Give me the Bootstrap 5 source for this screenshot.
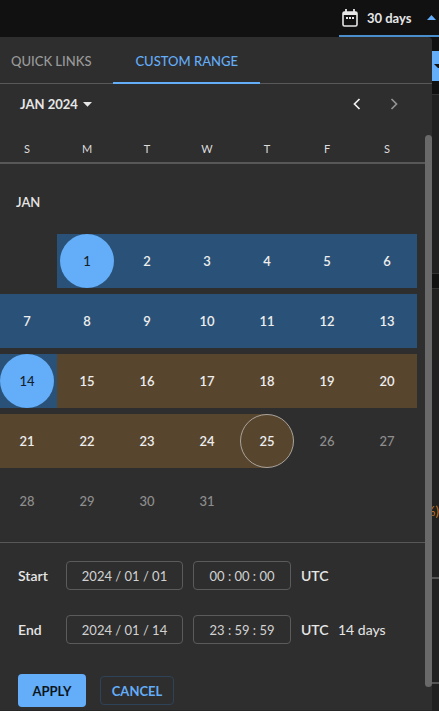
<!DOCTYPE html>
<html lang="en" data-bs-theme="dark">
<head>
<meta charset="utf-8">
<meta name="viewport" content="width=device-width, initial-scale=1">
<title>Date range</title>
<link href="https://cdn.jsdelivr.net/npm/bootstrap@5.3.0/dist/css/bootstrap.min.css" rel="stylesheet">
<style>
:root { --accent: #64adf8; --panel: #2e2e2e; --rule: #585858; --range: #2a5278; --compare: #57452e; }
body { font-family: Lato, sans-serif; font-size: 13px; line-height: 20px; color: #e6e6e6; background: #111; overflow: hidden; }
button { font-family: inherit; }
svg { display: block; flex: none; }
.plain-btn { background: none; border: 0; padding: 0; color: inherit; }
.range-toggle { width: 100px; height: 37px; padding: 0 3px; border-bottom: 2px solid #4c8dcb; font-size: 13px; font-weight: 700; }
.panel { background: var(--panel); border-top-right-radius: 4px; border-bottom: 1px solid #262626; min-width: 0; }
.tab-bar { height: 47px; border-bottom: 1px solid var(--rule); }
.tab-bar button { padding: 3px 22px 0; margin-bottom: -1px; font-size: 13px; font-weight: 500; color: #9a9a9a; border-bottom: 2px solid transparent; }
.tab-bar button:first-child { padding-left: 11px; }
.tab-bar button.active { color: var(--accent); border-color: var(--accent); }
.month-bar { height: 40px; padding: 0 30px 0 20px; font-weight: 700; }
.month-bar .arrows { gap: 21px; }
.thumb { width: 7px; margin: 11px 0 23px; border-radius: 4px; background: #696969; }
.cal-clip { overflow: hidden; }
.days-head { display: grid; grid-template-columns: repeat(7, 1fr); margin: 0 8px 0 -3px; height: 38px; padding-top: 15px; font-size: 11px; text-align: center; color: #dcdcdc; }
.head-rule { border-bottom: 2px solid #565756; }
.cal { width: calc(100% - 5px); margin-left: -3px; table-layout: fixed; border-spacing: 0 6px; border-collapse: separate; }
.cal th { height: 58px; padding: 6px 0 0 19px; font-weight: 600; }
.cal td { padding: 0; height: 54px; text-align: center; }
.cal button { width: 54px; height: 54px; border-radius: 50%; font-weight: 600; color: #eee; vertical-align: top; }
.cal .in-range { background: var(--range); }
.cal .in-compare { background: var(--compare); }
.cal .compare-end { background: linear-gradient(to right, var(--compare) 50%, transparent 50%); }
.cal .compare-end button { background: var(--compare); border: 1px solid #aaa49c; }
.cal .picked { background: var(--accent); color: #14202c; font-weight: 500; }
.cal button:disabled { color: #8e8e8e; font-weight: 500; }
.range-form { border-top: 1px solid var(--rule); padding: 18px 18px 0; font-size: 14px; }
.range-form .field-row { height: 29px; margin-bottom: 25px; }
.range-form label { width: 48px; font-weight: 600; }
.range-form input { height: 29px; padding: 0; text-align: center; font-size: 13px; color: #d2d2d2; background: transparent; border: 1px solid #5b5b5b; border-radius: 4px; }
.date-box { width: 117px; margin-right: 10px; }
.time-box { width: 98px; margin-right: 10px; }
.zone { width: 37px; font-weight: 600; }
.actions { margin-top: 30px; gap: 14px; }
.actions .btn { font-size: 13px; line-height: 20px; padding: 0; border-radius: 4px; font-weight: 700; }
.btn-apply, .btn-apply:hover { width: 68px; height: 33px; background: var(--accent); color: #0c1620; }
.btn-cancel, .btn-cancel:hover { width: 74px; height: 29px; color: var(--accent); border: 1px solid #2e4358; }
.behind { width: 7px; background: #111; overflow: hidden; }
.behind .split { height: 30px; margin-top: 14px; background: var(--accent); }
.behind .tile { background: #202020; border-top: 1px solid #333; }
.tile-a { height: 180px; margin-top: 13px; border-bottom: 1px solid #333; }
.tile-b { margin-top: 14px; }
.pct { height: 20px; margin-top: 212px; color: #c47a28; }
.tick { height: 2px; background: #555; }
.tick-a { margin-top: 56px; }
.tick-b { margin-top: 103px; }
</style>
</head>
<body>
<div class="d-flex flex-column min-vh-100">
  <header class="d-flex justify-content-end">
    <button type="button" class="plain-btn range-toggle d-flex align-items-center">
      <svg width="17" height="18" viewBox="0 0 17 18" fill="none" stroke="#e6e6e6"><rect x="1" y="3" width="14" height="14" rx="1.500" stroke-width="1.6"/><path d="M1 4.500h14" stroke-width="3"/><path d="M4 0v3M12 0v3" stroke-width="1.8"/><path d="M4 9h2M7 9h2M10 9h2" stroke-width="2"/></svg>
      <span class="ms-2">30 days</span>
      <svg class="ms-auto" width="9" height="5" viewBox="0 0 9 5"><path d="M0 5L4.500 0L9 5z" fill="#64adf8"/></svg>
    </button>
  </header>
  <div class="d-flex flex-grow-1">
    <main class="panel flex-grow-1 d-flex flex-column">
      <div class="tab-bar d-flex" role="tablist">
        <button type="button" role="tab" class="plain-btn">QUICK LINKS</button>
        <button type="button" role="tab" class="plain-btn active" aria-selected="true">CUSTOM RANGE</button>
      </div>
      <div class="month-bar d-flex align-items-center justify-content-between">
        <button type="button" class="plain-btn d-flex align-items-center gap-1 fw-bold">JAN 2024
          <svg width="10" height="5" viewBox="0 0 10 5"><path d="M1 0h9L5.500 4.800z" fill="#e6e6e6"/></svg>
        </button>
        <div class="arrows d-flex">
          <button type="button" class="plain-btn" aria-label="Previous month"><svg width="16" height="16" viewBox="0 0 16 16" fill="none" stroke="#f0f0f0" stroke-width="1.7"><path d="M10.500 3L5.500 8l5 5"/></svg></button>
          <button type="button" class="plain-btn" aria-label="Next month"><svg width="16" height="16" viewBox="0 0 16 16" fill="none" stroke="#939393" stroke-width="1.7"><path d="M5.500 3l5 5l-5 5"/></svg></button>
        </div>
      </div>
      <div class="d-flex flex-grow-1">
        <div class="cal-clip flex-grow-1">
          <div class="head-rule"><div class="days-head"><span>S</span><span>M</span><span>T</span><span>W</span><span>T</span><span>F</span><span>S</span></div></div>
          <table class="cal">
            <tbody>
              <tr><th colspan="7" scope="colgroup">JAN</th></tr>
              <tr><td></td><td class="in-range"><button type="button" class="plain-btn picked">1</button></td><td class="in-range"><button type="button" class="plain-btn">2</button></td><td class="in-range"><button type="button" class="plain-btn">3</button></td><td class="in-range"><button type="button" class="plain-btn">4</button></td><td class="in-range"><button type="button" class="plain-btn">5</button></td><td class="in-range"><button type="button" class="plain-btn">6</button></td></tr>
              <tr><td class="in-range"><button type="button" class="plain-btn">7</button></td><td class="in-range"><button type="button" class="plain-btn">8</button></td><td class="in-range"><button type="button" class="plain-btn">9</button></td><td class="in-range"><button type="button" class="plain-btn">10</button></td><td class="in-range"><button type="button" class="plain-btn">11</button></td><td class="in-range"><button type="button" class="plain-btn">12</button></td><td class="in-range"><button type="button" class="plain-btn">13</button></td></tr>
              <tr><td class="in-range"><button type="button" class="plain-btn picked">14</button></td><td class="in-compare"><button type="button" class="plain-btn">15</button></td><td class="in-compare"><button type="button" class="plain-btn">16</button></td><td class="in-compare"><button type="button" class="plain-btn">17</button></td><td class="in-compare"><button type="button" class="plain-btn">18</button></td><td class="in-compare"><button type="button" class="plain-btn">19</button></td><td class="in-compare"><button type="button" class="plain-btn">20</button></td></tr>
              <tr><td class="in-compare"><button type="button" class="plain-btn">21</button></td><td class="in-compare"><button type="button" class="plain-btn">22</button></td><td class="in-compare"><button type="button" class="plain-btn">23</button></td><td class="in-compare"><button type="button" class="plain-btn">24</button></td><td class="compare-end"><button type="button" class="plain-btn">25</button></td><td><button type="button" class="plain-btn" disabled>26</button></td><td><button type="button" class="plain-btn" disabled>27</button></td></tr>
              <tr><td><button type="button" class="plain-btn" disabled>28</button></td><td><button type="button" class="plain-btn" disabled>29</button></td><td><button type="button" class="plain-btn" disabled>30</button></td><td><button type="button" class="plain-btn" disabled>31</button></td><td></td><td></td><td></td></tr>
            </tbody>
          </table>
          <form class="range-form mt-2">
            <div class="field-row d-flex align-items-center">
              <label for="start-date">Start</label>
              <input id="start-date" class="date-box" type="text" value="2024 / 01 / 01">
              <input class="time-box" type="text" aria-label="Start time" value="00 : 00 : 00">
              <span class="zone">UTC</span>
            </div>
            <div class="field-row d-flex align-items-center">
              <label for="end-date">End</label>
              <input id="end-date" class="date-box" type="text" value="2024 / 01 / 14">
              <input class="time-box" type="text" aria-label="End time" value="23 : 59 : 59">
              <span class="zone">UTC</span><span>14 days</span>
            </div>
            <div class="actions d-flex align-items-center">
              <button type="button" class="btn btn-apply">APPLY</button>
              <button type="button" class="btn btn-cancel">CANCEL</button>
            </div>
          </form>
        </div>
        <div class="thumb flex-shrink-0"></div>
      </div>
    </main>
    <aside class="behind flex-shrink-0 d-flex flex-column">
      <div class="split d-flex align-items-center justify-content-end"><svg width="5" height="4" viewBox="0 0 5 4"><path d="M0 0h5v4L4 4z" fill="#111"/></svg></div>
      <div class="tile tile-a"></div>
      <div class="tile tile-b flex-grow-1">
        <div class="pct d-flex justify-content-end">%)</div>
        <div class="tick tick-a"></div>
        <div class="tick tick-b"></div>
      </div>
    </aside>
  </div>
</div>
<script src="https://cdn.jsdelivr.net/npm/bootstrap@5.3.0/dist/js/bootstrap.bundle.min.js"></script>
</body>
</html>
